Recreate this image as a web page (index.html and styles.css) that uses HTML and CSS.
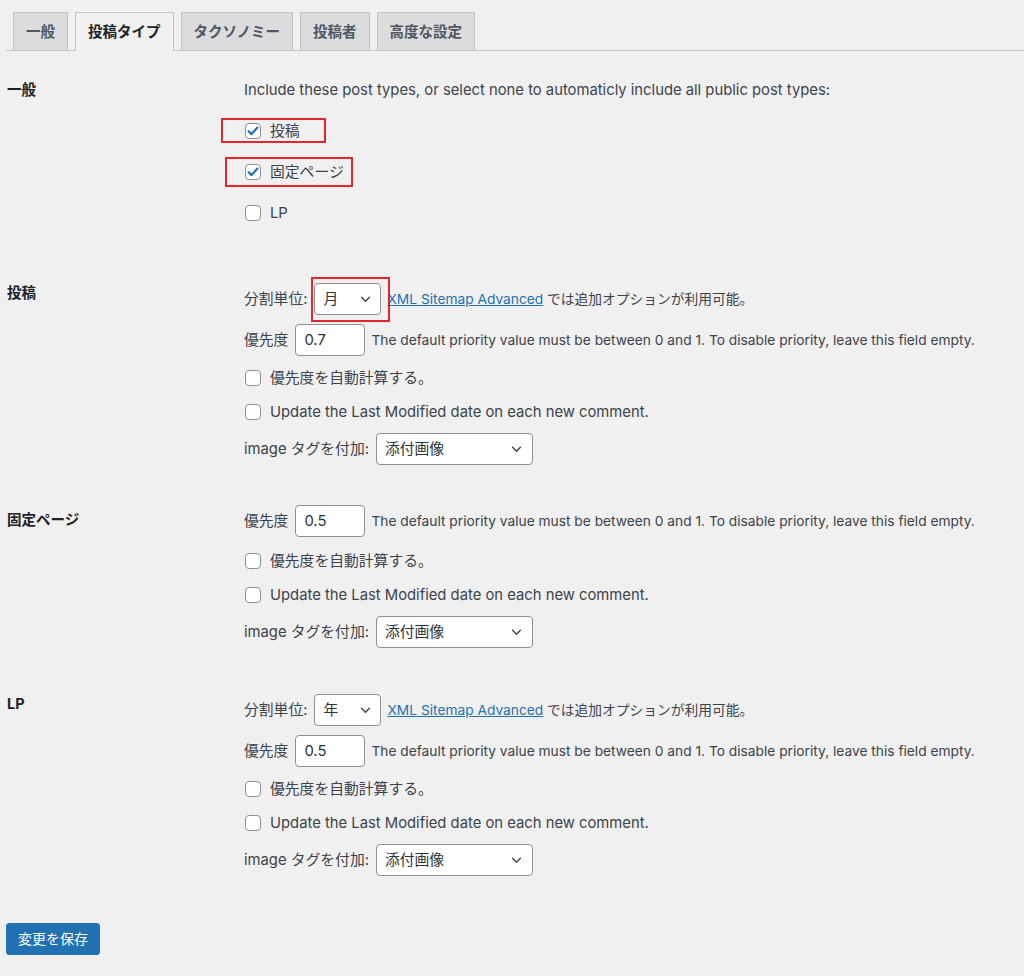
FILE: index.html
```html
<!DOCTYPE html>
<html lang="ja">
<head>
<meta charset="utf-8">
<title>投稿タイプ</title>
<link rel="stylesheet" href="styles.css">
</head>
<body>
<div class="wrap">
  <nav class="tabs">
    <a class="tab">一般</a>
    <a class="tab active">投稿タイプ</a>
    <a class="tab">タクソノミー</a>
    <a class="tab">投稿者</a>
    <a class="tab">高度な設定</a>
  </nav>

  <section class="sec sec-general">
    <h3 class="sec-label">一般</h3>
    <div class="sec-body">
      <p class="intro">Include these post types, or select none to automaticly include all public post types:</p>
      <label class="cb-row cb-gen">
        <span class="cb checked"><svg viewBox="0 0 16 16" width="16" height="16"><path d="M3.6 8.2 L6.6 11.1 L12.4 4.6" fill="none" stroke="#2271b1" stroke-width="2.2" stroke-linecap="round" stroke-linejoin="round"/></svg></span>
        <span class="cb-text">投稿</span>
        <span class="mark mark-1"></span>
      </label>
      <label class="cb-row cb-gen">
        <span class="cb checked"><svg viewBox="0 0 16 16" width="16" height="16"><path d="M3.6 8.2 L6.6 11.1 L12.4 4.6" fill="none" stroke="#2271b1" stroke-width="2.2" stroke-linecap="round" stroke-linejoin="round"/></svg></span>
        <span class="cb-text">固定ページ</span>
        <span class="mark mark-2"></span>
      </label>
      <label class="cb-row cb-gen">
        <span class="cb"></span>
        <span class="cb-text">LP</span>
      </label>
    </div>
  </section>

  <section class="sec sec-post">
    <h3 class="sec-label">投稿</h3>
    <div class="sec-body rows">
      <div class="field-row">
        <span class="field-label">分割単位:</span>
        <span class="select select-sm">月<svg class="chev" viewBox="0 0 12 8" width="11" height="7"><path d="M1.5 1.5 L6 6 L10.5 1.5" fill="none" stroke="#3c434a" stroke-width="1.6" stroke-linecap="round" stroke-linejoin="round"/></svg><span class="mark mark-3"></span></span>
        <span class="desc"><a class="link">XML Sitemap Advanced</a> では追加オプションが利用可能。</span>
      </div>
      <div class="field-row">
        <span class="field-label">優先度</span>
        <span class="input">0.7</span>
        <span class="desc">The default priority value must be between 0 and 1. To disable priority, leave this field empty.</span>
      </div>
      <label class="cb-row"><span class="cb"></span><span class="cb-text">優先度を自動計算する。</span></label>
      <label class="cb-row"><span class="cb"></span><span class="cb-text">Update the Last Modified date on each new comment.</span></label>
      <div class="field-row">
        <span class="field-label">image タグを付加:</span>
        <span class="select select-lg">添付画像<svg class="chev" viewBox="0 0 12 8" width="11" height="7"><path d="M1.5 1.5 L6 6 L10.5 1.5" fill="none" stroke="#3c434a" stroke-width="1.6" stroke-linecap="round" stroke-linejoin="round"/></svg></span>
      </div>
    </div>
  </section>

  <section class="sec sec-page">
    <h3 class="sec-label">固定ページ</h3>
    <div class="sec-body rows">
      <div class="field-row">
        <span class="field-label">優先度</span>
        <span class="input">0.5</span>
        <span class="desc">The default priority value must be between 0 and 1. To disable priority, leave this field empty.</span>
      </div>
      <label class="cb-row cb-after-input"><span class="cb"></span><span class="cb-text">優先度を自動計算する。</span></label>
      <label class="cb-row"><span class="cb"></span><span class="cb-text">Update the Last Modified date on each new comment.</span></label>
      <div class="field-row">
        <span class="field-label">image タグを付加:</span>
        <span class="select select-lg">添付画像<svg class="chev" viewBox="0 0 12 8" width="11" height="7"><path d="M1.5 1.5 L6 6 L10.5 1.5" fill="none" stroke="#3c434a" stroke-width="1.6" stroke-linecap="round" stroke-linejoin="round"/></svg></span>
      </div>
    </div>
  </section>

  <section class="sec sec-lp">
    <h3 class="sec-label">LP</h3>
    <div class="sec-body rows">
      <div class="field-row">
        <span class="field-label">分割単位:</span>
        <span class="select select-sm">年<svg class="chev" viewBox="0 0 12 8" width="11" height="7"><path d="M1.5 1.5 L6 6 L10.5 1.5" fill="none" stroke="#3c434a" stroke-width="1.6" stroke-linecap="round" stroke-linejoin="round"/></svg></span>
        <span class="desc"><a class="link">XML Sitemap Advanced</a> では追加オプションが利用可能。</span>
      </div>
      <div class="field-row">
        <span class="field-label">優先度</span>
        <span class="input">0.5</span>
        <span class="desc">The default priority value must be between 0 and 1. To disable priority, leave this field empty.</span>
      </div>
      <label class="cb-row"><span class="cb"></span><span class="cb-text">優先度を自動計算する。</span></label>
      <label class="cb-row"><span class="cb"></span><span class="cb-text">Update the Last Modified date on each new comment.</span></label>
      <div class="field-row">
        <span class="field-label">image タグを付加:</span>
        <span class="select select-lg">添付画像<svg class="chev" viewBox="0 0 12 8" width="11" height="7"><path d="M1.5 1.5 L6 6 L10.5 1.5" fill="none" stroke="#3c434a" stroke-width="1.6" stroke-linecap="round" stroke-linejoin="round"/></svg></span>
      </div>
    </div>
  </section>

  <button class="save">変更を保存</button>
</div>
</body>
</html>
```

FILE: styles.css
```css
* { box-sizing: border-box; }
html, body { margin: 0; padding: 0; }
body {
  background: #f0f0f1;
  color: #3c434a;
  font-family: Inter, "Noto Sans CJK JP", sans-serif;
  font-size: 14.8px;
  line-height: 20px;
  width: 1024px;
  height: 976px;
  overflow: hidden;
}
.wrap { padding: 12px 0 0 0; }

.tabs {
  display: flex;
  gap: 7px;
  margin-left: 6px;
  padding-left: 7px;
  border-bottom: 1px solid #c3c4c7;
  height: 39px;
}
.tab {
  display: block;
  height: 38px;
  padding: 0 12px;
  line-height: 37px;
  font-weight: 700;
  font-size: 14.5px;
  color: #50575e;
  background: #dcdcde;
  border: 1px solid #c3c4c7;
  border-bottom: none;
  white-space: nowrap;
}
.tab.active {
  background: #f0f0f1;
  color: #1d2327;
  height: 39px;
}

.sec {
  display: grid;
  grid-template-columns: 237px 1fr;
  padding-left: 7px;
}
.sec-label {
  margin: 0;
  font-size: 14.5px;
  font-weight: 700;
  line-height: 20px;
  color: #1d2327;
}
.sec-general { margin-top: 29px; }
.sec-post { margin-top: 58px; }
.sec-page { margin-top: 40px; }
.sec-page .sec-label { padding-top: 5px; }
.sec-lp { margin-top: 46px; }

.intro { margin: 0 0 18px 0; }
.cb-gen { height: 24px; }
.cb-gen + .cb-gen { margin-top: 16px; }

.rows { display: flex; flex-direction: column; gap: 9px; }
.cb-after-input { margin-top: 2px; }

.cb-row {
  position: relative;
  display: flex;
  align-items: center;
  height: 25px;
}
.cb {
  display: inline-block;
  width: 16px;
  height: 16px;
  margin-left: 1px;
  margin-right: 9px;
  border: 1px solid #8c8f94;
  border-radius: 4px;
  background: #fff;
  flex: none;
  position: relative;
}
.cb svg { position: absolute; left: -1px; top: -1px; }
.cb-text { white-space: nowrap; }

.field-row {
  display: flex;
  align-items: center;
  height: 32px;
  white-space: nowrap;
}
.field-label { margin-right: 7px; }
.select {
  position: relative;
  display: flex;
  align-items: center;
  justify-content: space-between;
  height: 32px;
  padding: 0 9px 0 8px;
  border: 1px solid #8c8f94;
  border-radius: 4px;
  background: #fff;
  color: #2c3338;
}
.select-sm { width: 67px; }
.select-lg { width: 157px; padding-right: 10px; }
.chev { flex: none; }
.link {
  color: #2271b1;
  text-decoration: underline;
}
.input {
  display: flex;
  align-items: center;
  width: 70px;
  height: 32px;
  padding: 0 8px;
  border: 1px solid #8c8f94;
  border-radius: 4px;
  background: #fff;
  color: #2c3338;
}
.desc {
  margin-left: 6px;
  font-size: 13.75px;
}

.mark {
  position: absolute;
  border: 2px solid #e3262b;
  pointer-events: none;
}
.mark-1 { left: -23px; top: 0; width: 105px; height: 25px; }
.mark-2 { left: -19px; top: -2px; width: 128px; height: 30px; }
.mark-3 { left: -4px; top: -7px; width: 79px; height: 45px; }

.save {
  display: block;
  margin: 47px 0 0 6px;
  height: 32px;
  padding: 0 11px;
  background: #2271b1;
  border: 1px solid #2271b1;
  border-radius: 3px;
  color: #fff;
  font-family: Inter, "Noto Sans CJK JP", sans-serif;
  font-size: 14px;
  line-height: 30px;
}
```
